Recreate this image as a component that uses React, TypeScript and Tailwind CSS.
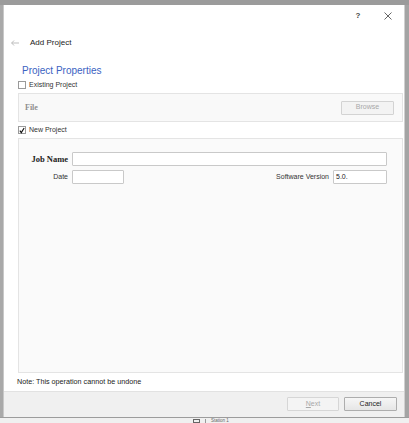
import React from 'react'

const sans = { fontFamily: '"Liberation Sans", Arial, sans-serif' }

function Box({ checked }: { checked?: boolean }) {
  return (
    <span className="w-[8px] h-[8px] border border-[#9a9a9a] bg-white flex items-center justify-center shrink-0">
      {checked && (
        <svg width="7" height="7" viewBox="0 0 7 7" fill="none" stroke="#111" strokeWidth="1.3">
          <polyline points="1,3.6 2.7,6 6,0.6" />
        </svg>
      )}
    </span>
  )
}

export default function App() {
  return (
    <div className="w-[409px] h-[423px] overflow-hidden flex flex-col bg-[#efefef]" style={sans}>
      {/* window frame top */}
      <div className="h-[5px] bg-[#9b9b9b] shrink-0" />
      <div className="flex h-[412px] shrink-0">
        <div className="w-[4px] bg-[#a9a9a9] border-r border-[#c8c8c8]" />

        {/* Dialog */}
        <div className="w-[400px] bg-white flex flex-col">
          {/* Title bar */}
          <div className="h-[22px] flex justify-end items-center pr-[1px] text-[#444]">
            <span className="w-[30px] text-center text-[8px] font-bold leading-none">?</span>
            <span className="w-[30px] flex justify-center">
              <svg width="8" height="8" viewBox="0 0 8 8" stroke="#555" strokeWidth="0.9">
                <line x1="0.5" y1="0.5" x2="7.5" y2="7.5" />
                <line x1="7.5" y1="0.5" x2="0.5" y2="7.5" />
              </svg>
            </span>
          </div>

          {/* Header */}
          <div className="h-[31px] flex items-center pl-[7px]">
            <svg width="8" height="6" viewBox="0 0 8 6" fill="none" stroke="#bdbdbd" strokeWidth="1">
              <line x1="0.5" y1="3" x2="8" y2="3" />
              <polyline points="3,0.5 0.7,3 3,5.5" />
            </svg>
            <span className="ml-[11px] text-[8px] text-[#222]">Add Project</span>
          </div>

          <div className="mt-[7px] h-[12px] pl-[18px] flex items-center text-[10px] text-[#3a62c2] leading-none">
            Project Properties
          </div>

          <div className="h-[16px] pl-[14px] flex items-center">
            <Box />
            <span className="ml-[3px] text-[7px] text-[#333]">Existing Project</span>
          </div>

          {/* File panel */}
          <div className="h-[29px] ml-[14px] mr-[1px] border border-[#e4e4e4] bg-[#f9f9f9] flex items-center pl-[6px] pr-[8px]">
            <span className="text-[8px] font-bold text-[#8e8e8e] font-['Liberation_Serif',serif]">File</span>
            <button className="ml-auto w-[53px] h-[14px] border border-[#d3d3d3] bg-[#f3f3f3] rounded-[1px] text-[7px] text-[#a8a8a8]">
              Browse
            </button>
          </div>

          <div className="h-[16px] pl-[14px] flex items-center">
            <Box checked />
            <span className="ml-[3px] text-[7px] text-[#333]">New Project</span>
          </div>

          {/* Main panel */}
          <div className="h-[235px] ml-[14px] mr-[1px] border border-[#e4e4e4] bg-[#fafafa] pt-[13px] pr-[15px] flex flex-col gap-[4px]">
            <div className="flex items-center h-[14px]">
              <span className="w-[49px] text-right text-[8.5px] font-bold text-[#222] font-['Liberation_Serif',serif]">Job Name</span>
              <div className="ml-[4px] flex-1 h-[14px] border border-[#c9c9c9] bg-white rounded-[1px]" />
            </div>
            <div className="flex items-center h-[14px]">
              <span className="w-[49px] text-right text-[7px] text-[#333]">Date</span>
              <div className="ml-[4px] w-[52px] h-[14px] border border-[#c9c9c9] bg-white rounded-[1px]" />
              <span className="ml-auto text-[7px] text-[#333]">Software Version</span>
              <div className="ml-[4px] w-[54px] h-[14px] border border-[#c9c9c9] bg-white rounded-[1px] flex items-center pl-[2px] text-[7px] text-[#222]">
                5.0.
              </div>
            </div>
          </div>

          <div className="h-[18px] pl-[13px] flex items-center text-[7.2px] text-[#222]">
            <span className="text-[#222]">Note: This operation cannot be undone</span>
          </div>

          {/* Footer */}
          <div className="h-[26px] bg-[#f0f0f0] border-t border-[#e2e2e2] flex items-start justify-end pt-[5px] pr-[7px] gap-[5px]">
            <button className="w-[52px] h-[14px] border border-[#d6d6d6] bg-[#f4f4f4] rounded-[1px] text-[7px] text-[#a8a8a8]">
              <span className="underline">N</span>ext
            </button>
            <button className="w-[53px] h-[14px] border border-[#adadad] bg-gradient-to-b from-[#f6f6f6] to-[#e6e6e6] rounded-[1px] text-[7px] text-[#222]">
              Cancel
            </button>
          </div>
        </div>

        <div className="w-[5px] bg-[#a4a4a4] border-l border-[#d0d0d0]" />
      </div>

      {/* background below */}
      <div className="flex-1 border-t border-[#9c9c9c] bg-[#f0f0f0] relative">
        <div className="absolute left-[193px] top-[1px] flex items-center gap-[5px] text-[4.5px] text-[#666] leading-none">
          <span className="w-[7px] h-[4px] border border-[#666]" />
          <span className="w-px h-[4px] bg-[#999]" />
          <span>Station 1</span>
        </div>
      </div>
    </div>
  )
}
